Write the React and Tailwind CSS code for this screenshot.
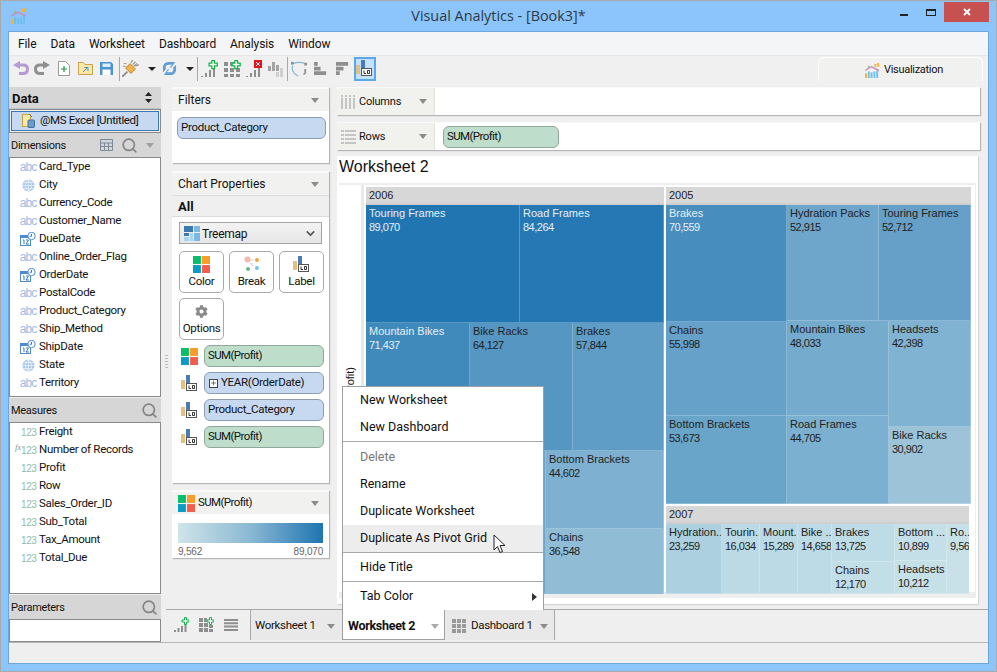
import React from "react";
import { Search, ChevronDown, Plus } from "lucide-react";
import { FaCog } from "react-icons/fa";

const dimensions = [
  ["abc", "Card_Type"],
  ["geo", "City"],
  ["abc", "Currency_Code"],
  ["abc", "Customer_Name"],
  ["date", "DueDate"],
  ["abc", "Online_Order_Flag"],
  ["date", "OrderDate"],
  ["abc", "PostalCode"],
  ["abc", "Product_Category"],
  ["abc", "Ship_Method"],
  ["date", "ShipDate"],
  ["geo", "State"],
  ["abc", "Territory"],
];

const measures = [
  "Freight",
  "Number of Records",
  "Profit",
  "Row",
  "Sales_Order_ID",
  "Sub_Total",
  "Tax_Amount",
  "Total_Due",
];

const small = "text-[11.500px] tracking-[-0.3px]";

const Tri = ({ color = "#8c8c8c" }) => (
  <svg width="8" height="5" viewBox="0 0 8 5" className="shrink-0">
    <path d="M0 0h8L4 5z" fill={color} />
  </svg>
);

const Caret = () => (
  <svg width="8" height="4" viewBox="0 0 8 4" className="shrink-0">
    <path d="M0 0h8L4 4z" fill="#222" />
  </svg>
);

const Squares = ({ s = 7 }) => (
  <svg width={s * 2 + 1} height={s * 2 + 1} viewBox="0 0 15 15" className="shrink-0">
    <rect width="7" height="7" fill="#08bd6c" />
    <rect x="8" width="7" height="7" fill="#f99d2a" />
    <rect y="8" width="7" height="7" fill="#0a9bc7" />
    <rect x="8" y="8" width="7" height="7" fill="#f45d4e" />
  </svg>
);

const LabelIcon = () => (
  <svg width="17" height="17" viewBox="0 0 17 17" className="shrink-0">
    <rect x="0" y="5" width="4" height="9" fill="#e5bf80" />
    <rect x="5" y="0" width="4" height="8" fill="#4a7bb5" />
    <rect x="5.500" y="8.500" width="10" height="7" fill="#fff" stroke="#555" />
    <path d="M8 10.500v3h2M11.500 10.500h2v3h-2z" fill="none" stroke="#333" />
  </svg>
);

const Globe = () => (
  <svg width="13" height="13" viewBox="0 0 13 13">
    <circle cx="6.500" cy="6.500" r="6" fill="#a9c8ec" />
    <path d="M.5 6.500h12M1.500 3.500h10M1.500 9.500h10M6.500.5v12M6.500.5c-4 3-4 9 0 12M6.500.5c4 3 4 9 0 12" fill="none" stroke="#e8f1fb" strokeWidth=".8" />
  </svg>
);

const DateIcon = () => (
  <svg width="16" height="14" viewBox="0 0 16 14">
    <rect x=".5" y="3.500" width="10" height="10" fill="#fff" stroke="#4c8bd0" />
    <rect x="0" y="3" width="11" height="3" fill="#4c8bd0" />
    <path d="M3 8h1v4M6 8h2.500L6 12h3" fill="none" stroke="#3a78bd" />
    <circle cx="11.500" cy="4" r="3.700" fill="#fff" stroke="#4c8bd0" />
    <path d="M11.500 2v2.300h-1.800" fill="none" stroke="#3a78bd" />
  </svg>
);

const FieldIcon = ({ type }) => {
  if (type === "geo") return <Globe />;
  if (type === "date") return <DateIcon />;
  return <span className="text-[12px] tracking-[-0.9px] leading-none text-[#9dbbe8] [font-family:'Liberation_Sans',sans-serif] font-medium">abc</span>;
};

const AppLogo = ({ s = 16 }) => (
  <svg width={s} height={s} viewBox="0 0 16 16" className="shrink-0">
    <rect x="0" y="11" width="2" height="5" fill="#f8b133" />
    <rect x="3" y="9" width="2" height="7" fill="#6cc0ee" />
    <rect x="6" y="10" width="2" height="6" fill="#6cc0ee" />
    <rect x="9" y="9" width="2" height="7" fill="#6cc0ee" />
    <rect x="12" y="8" width="2" height="8" fill="#6cc0ee" />
    <rect x="3" y="3" width="2" height="2" fill="#8cc47e" />
    <rect x="10" y="1" width="2" height="3" fill="#f8b133" />
    <rect x="13" y="0" width="2" height="4" fill="#f8b133" />
    <path d="M0 8l7-4 8 4" fill="none" stroke="#c78fc0" strokeWidth="1.500" />
  </svg>
);

const BarsAdd = ({ mark = "plus" }) => (
  <svg width="18" height="18" viewBox="0 0 18 18">
    <path d="M1 16h2v1H1zM5 13h2v4H5zM9 10h2v7H9zM13 8h2v9h-2z" fill="#8e8e8e" />
    {mark === "plus" && <path d="M9 3h3V0h3v3h3v3h-3v3h-3V6H9z" fill="#fff" stroke="#12b34a" strokeWidth="1.400" transform="translate(1 .5) scale(.9)" />}
    {mark === "x" && (
      <g>
        <rect x="9" y="0" width="8" height="8" fill="#e5141c" />
        <path d="M11 2l4 4M15 2l-4 4" stroke="#fff" />
      </g>
    )}
  </svg>
);

const GridAdd = () => (
  <svg width="18" height="18" viewBox="0 0 18 18">
    <path d="M1 2h4v4H1zM7 2h4v4H7zM1 8h4v4H1zM7 8h4v4H7zM13 8h4v4h-4zM1 14h4v3H1zM7 14h4v3H7zM13 14h4v3h-4z" fill="#8e8e8e" />
    <path d="M9 3h3V0h3v3h3v3h-3v3h-3V6H9z" fill="#fff" stroke="#12b34a" strokeWidth="1.400" transform="translate(1 .5) scale(.9)" />
  </svg>
);

const toolbarIcons = {
  undo: (
    <svg width="16" height="15" viewBox="0 0 16 15">
      <path d="M6 4h4c3 0 4.500 1.500 4.500 4s-1.500 4.500-4.500 4.500H6" fill="none" stroke="#b49bd2" strokeWidth="3" />
      <path d="M7 0v8L0 4z" fill="#b49bd2" />
    </svg>
  ),
  redo: (
    <svg width="16" height="15" viewBox="0 0 16 15">
      <path d="M10 4H6C3 4 1.500 5.500 1.500 8s1.500 4.500 4.500 4.500h4" fill="none" stroke="#8f8f8f" strokeWidth="3" />
      <path d="M9 0v8l7-4z" fill="#8f8f8f" />
    </svg>
  ),
  doc: (
    <svg width="12" height="15" viewBox="0 0 12 15">
      <path d="M.5.5h7l4 4v10H.5z" fill="#fff" stroke="#9a9a9a" />
      <path d="M6 5v6M3 8h6" stroke="#1c9a3f" strokeWidth="1.200" />
    </svg>
  ),
  folder: (
    <svg width="15" height="13" viewBox="0 0 15 13">
      <path d="M.5.5h5l1.500 2h7.500v10H.5z" fill="#fbe7a6" stroke="#c9a24e" />
      <path d="M5 10l4-4M6.500 5.500H10V9" fill="none" stroke="#3d8fd1" />
    </svg>
  ),
  save: (
    <svg width="13" height="13" viewBox="0 0 13 13">
      <path d="M0 0h11l2 2v11H0z" fill="#4b94cf" />
      <rect x="2.500" y="1.500" width="8" height="3.500" fill="#dcecf8" />
      <rect x="2.500" y="7.500" width="8" height="5.500" fill="#fff" />
    </svg>
  ),
  plug: (
    <svg width="17" height="17" viewBox="0 0 19 19">
      <path d="M0 19l6-6" stroke="#8a8a8a" strokeWidth="2" />
      <path d="M4 9l5-5 6 6-5 5z" fill="#f1b24a" stroke="#b87c20" />
      <path d="M10 3l2-3M15 7l4-2M12 5l3-3M13 7l4-3" stroke="#999" strokeWidth="1.400" />
      <path d="M2 4h3M1 7h3" stroke="#8a8a8a" />
    </svg>
  ),
  refresh: (
    <svg width="15" height="15" viewBox="0 0 16 16">
      <path d="M14 1H7C3 1 1 4 1 7v5l3-3V7c0-2 1-3 3-3h4L8 7h2z" fill="#5f9fd6" />
      <path d="M2 15h7c4 0 6-3 6-6V4l-3 3v2c0 2-1 3-3 3H5l3-3H6z" fill="#5f9fd6" />
    </svg>
  ),
  bars: (
    <svg width="16" height="17" viewBox="0 0 16 17">
      <path d="M0 6h3v5H0zM4 2h3v9H4zM8 5h3v6H8z" fill="#a3a3a3" />
      <path d="M8 12h3v5H8zM12 8h3v9h-3z" fill="#cfcfcf" />
    </svg>
  ),
  lasso: (
    <svg width="16" height="16" viewBox="0 0 18 18">
      <path d="M2 3c5-2 9-2 14 0M2 5c-2 5 1 9 6 12" fill="none" stroke="#7db6de" strokeWidth="1.300" />
      <path d="M14 15l2-1" stroke="#8e8e8e" strokeWidth="1.500" />
      <rect x="0" y="1" width="3" height="3" fill="#8e8e8e" />
      <rect x="15" y="2" width="3" height="3" fill="#8e8e8e" />
      <rect x="15" y="9" width="2" height="5" fill="#8e8e8e" />
    </svg>
  ),
  sortH: (
    <svg width="14" height="14" viewBox="0 0 15 15">
      <path d="M0 0h4v4H0zM0 5h7v4H0zM0 10h13v4H0z" fill="#8e8e8e" />
    </svg>
  ),
  sortD: (
    <svg width="14" height="14" viewBox="0 0 15 15">
      <path d="M0 0h13v4H0zM0 5h8v4H0zM0 10h4v4H0z" fill="#8e8e8e" />
    </svg>
  ),
};

const ToolBtn = ({ w = "w-[21.500px]", className = "", children }) => (
  <div className={`${w} h-full flex items-center justify-center shrink-0 ${className}`}>{children}</div>
);

const ToolSep = ({ className = "" }) => <div className={`w-px h-[24px] bg-[#a8a8a8] shrink-0 ${className}`} />;

const Toolbar = () => (
  <div className="h-[29px] flex items-center pl-[1px] pb-[4px] bg-[#f0f0f0] shrink-0">
    <ToolBtn>{toolbarIcons.undo}</ToolBtn>
    <ToolBtn>{toolbarIcons.redo}</ToolBtn>
    <ToolBtn>{toolbarIcons.doc}</ToolBtn>
    <ToolBtn>{toolbarIcons.folder}</ToolBtn>
    <ToolBtn>{toolbarIcons.save}</ToolBtn>
    <ToolSep className="ml-[1.500px]" />
    <ToolBtn>{toolbarIcons.plug}</ToolBtn>
    <ToolBtn w="w-[20px]"><Caret /></ToolBtn>
    <ToolBtn w="w-[16px]">{toolbarIcons.refresh}</ToolBtn>
    <ToolBtn w="w-[14px]" className="ml-[5px]"><Caret /></ToolBtn>
    <ToolSep />
    <ToolBtn w="w-[23px]"><BarsAdd /></ToolBtn>
    <ToolBtn w="w-[22px]"><GridAdd /></ToolBtn>
    <ToolBtn w="w-[23px]"><BarsAdd mark="x" /></ToolBtn>
    <ToolBtn w="w-[21px]">{toolbarIcons.bars}</ToolBtn>
    <ToolSep />
    <ToolBtn w="w-[22px]">{toolbarIcons.lasso}</ToolBtn>
    <ToolBtn w="w-[22px]">{toolbarIcons.sortH}</ToolBtn>
    <ToolBtn w="w-[22px]">{toolbarIcons.sortD}</ToolBtn>
    <div className="w-[22px] h-[24px] flex items-center justify-center bg-[#c4e2fb] border-2 border-[#5aa7ec] shrink-0">
      <LabelIcon />
    </div>
    <div className="ml-auto mr-[5px] w-[165px] h-[24px] flex items-center justify-center gap-[4px] bg-[#f1f1f0] border-t border-l border-r border-white rounded-t-[6px] text-[11px] tracking-[-0.3px] pl-[7px] pt-[3px]">
      <AppLogo s={15} />
      Visualization
    </div>
  </div>
);

const GrayHeader = ({ title, children }) => (
  <div className="h-[24px] bg-[#d6d6d6] flex items-center px-[2px] shrink-0">
    <span className="text-[11px] tracking-[-0.3px] pt-[2px]">{title}</span>
    <div className="ml-auto flex items-center gap-[8px]">{children}</div>
  </div>
);

const Mag = () => <Search size={17} strokeWidth={2.400} color="#858585" />;

const LeftPanel = () => (
  <div className="w-[152px] shrink-0 flex flex-col pt-[2px]">
    <div className="h-[22px] bg-[#d6d6d6] flex items-center pl-[3px] pr-[9px] shrink-0 border-b border-[#c2c2c2]">
      <span className="font-bold text-[13px] pt-[2px]">Data</span>
      <svg width="7" height="11" viewBox="0 0 7 11" className="ml-auto">
        <path d="M3.500 0L7 4H0zM3.500 11L0 7h7z" fill="#222" />
      </svg>
    </div>
    <div className="h-[24px] bg-[#f1f1f1] border border-[#8a8a8a] flex items-center px-[1px] shrink-0">
      <div className="w-full h-[20px] bg-[#c7d9f1] border border-[#3f74b5] flex items-center gap-[5px] pl-[10px] text-[11.500px] tracking-[-0.35px]">
        <svg width="13" height="14" viewBox="0 0 13 14" className="shrink-0">
          <rect x=".5" y=".5" width="8" height="12" fill="#fbeaa0" stroke="#c9a24e" />
          <path d="M7 0l3 3" stroke="#3a7cbd" />
          <rect x="6" y="6" width="6.500" height="7.500" rx="1" fill="#6d9cc9" stroke="#3d6f9f" />
        </svg>
        @MS Excel [Untitled]
      </div>
    </div>
    <GrayHeader title="Dimensions">
      <svg width="13" height="12" viewBox="0 0 13 12">
        <path d="M.5.5h12v11H.5zM.5 4h12M.5 7.500h12M4.500 4v7.500M8.500 4v7.500" fill="none" stroke="#7b8a99" />
      </svg>
      <Mag />
      <div className="mr-[5px]"><Tri color="#a0a0a0" /></div>
    </GrayHeader>
    <div className="h-[240px] bg-white border border-[#8a8a8a] shrink-0 overflow-hidden">
      {dimensions.map(([type, name], i) => (
        <div key={i} className={`h-[18px] flex items-center ${small}`}>
          <div className="w-[16px] ml-[10px] shrink-0 flex justify-center">
            <FieldIcon type={type} />
          </div>
          <span className="ml-[3px]">{name}</span>
        </div>
      ))}
    </div>
    <div className="pt-[1px]">
      <GrayHeader title="Measures">
        <div className="mr-[1px]"><Mag /></div>
      </GrayHeader>
    </div>
    <div className="h-[172px] bg-white border border-[#8a8a8a] shrink-0 overflow-hidden">
      {measures.map((name, i) => (
        <div key={i} className={`h-[18px] flex items-center relative ${small}`}>
          {i === 1 && <span className="absolute left-[5px] top-[0px] text-[9px] italic text-[#8d9a92] [font-family:'Liberation_Serif',serif]">fx</span>}
          <span className="w-[18px] ml-[11px] shrink-0 text-[10px] tracking-[-0.4px] font-medium text-[#8fbca9] [font-family:'Liberation_Sans',sans-serif]">123</span>
          <span>{name}</span>
        </div>
      ))}
    </div>
    <div className="pt-[1px]">
      <GrayHeader title="Parameters">
        <div className="mr-[1px]"><Mag /></div>
      </GrayHeader>
    </div>
    <div className="h-[23px] bg-white border border-[#8a8a8a] shrink-0" />
  </div>
);

const Card = ({ className = "", children }) => (
  <div className={`bg-white border-t-2 border-[#fafafa] shadow-[1px_1px_1px_#b5b5b5] w-[157px] shrink-0 ${className}`}>
    {children}
  </div>
);

const CardHeader = ({ children }) => (
  <div className="h-[22px] bg-[#f1f1ef] flex items-center pl-[6px] pr-[10px] gap-[3px] text-[12px]">
    {children}
    <div className="ml-auto"><Tri /></div>
  </div>
);

const Pill = ({ green, children, className = "" }) => (
  <div
    className={`h-[22px] flex items-center pl-[3px] rounded-[6px] border ${small} ${
      green ? "bg-[#bedecb] border-[#8fa89a]" : "bg-[#c7d9f1] border-[#8c9db3]"
    } ${className}`}
  >
    {children}
  </div>
);

const PropBtn = ({ icon, label }) => (
  <div className={`w-[45px] h-[42px] bg-white border border-[#a8a8a8] rounded-[5px] flex flex-col items-center pt-[3px] shrink-0 ${small}`}>
    <div className="h-[18px] flex items-center justify-center">{icon}</div>
    <span className="mt-[1px] leading-[14px]">{label}</span>
  </div>
);

const BreakIcon = () => (
  <svg width="16" height="16" viewBox="0 0 16 16">
    <circle cx="3.500" cy="3.500" r="3" fill="#f5b7ae" />
    <circle cx="13" cy="4" r="2" fill="#f5a33a" />
    <circle cx="4" cy="13" r="2" fill="#6cb884" />
    <circle cx="13" cy="12" r="2" fill="#79c2ec" />
    <path d="M7 4h3M6 7l3 3M8 7v2" stroke="#bbb" strokeWidth=".7" />
  </svg>
);

const TreemapIcon = () => (
  <svg width="16" height="15" viewBox="0 0 16 15" className="shrink-0">
    <rect width="9" height="6" fill="#3e79ad" />
    <rect x="10" width="6" height="6" fill="#7ab8e6" />
    <rect y="7" width="5" height="3" fill="#3e79ad" />
    <rect y="11" width="5" height="4" fill="#a9d3ef" />
    <rect x="6" y="7" width="3" height="8" fill="#a9d3ef" />
    <rect x="10" y="7" width="6" height="8" fill="#7ab8e6" />
  </svg>
);

const PillRow = ({ icon, children }) => (
  <div className="flex items-center h-[27px]">
    <div className="w-[32px] pl-[3px] flex justify-center shrink-0">{icon}</div>
    <div className="flex-1 mr-[5px]">{children}</div>
  </div>
);

const MiddlePanel = () => (
  <div className="w-[157px] shrink-0 flex flex-col pt-[2px]">
    <Card className="h-[76px]">
      <CardHeader>Filters</CardHeader>
      <div className="pl-[5px] pr-[3px] pt-[6px]">
        <Pill className="h-[18px]">Product_Category</Pill>
      </div>
    </Card>
    <Card className="h-[312px] mt-[8px]">
      <CardHeader>Chart Properties</CardHeader>
      <div className="h-[22px] bg-[#efefef] border-y border-[#dcdcdc] flex items-center pl-[6px] pt-[2px] font-bold text-[13px]">All</div>
      <div className="px-[7px] pt-[5px]">
        <div className="h-[22px] bg-[linear-gradient(#f3f3f3,#e6e6e6)] border border-[#a2a2a2] flex items-center pl-[4px] pr-[4px] gap-[2px] text-[12px] tracking-[-0.3px]">
          <TreemapIcon />
          <span className="pt-[1px]">Treemap</span>
          <ChevronDown size={13} strokeWidth={3} color="#555" className="ml-auto" />
        </div>
        <div className="flex gap-[5px] mt-[7px]">
          <PropBtn icon={<Squares s={8} />} label="Color" />
          <PropBtn icon={<BreakIcon />} label="Break" />
          <PropBtn icon={<LabelIcon />} label="Label" />
        </div>
        <div className="mt-[5px]">
          <PropBtn icon={<FaCog size={13} color="#8a8a8a" />} label="Options" />
        </div>
      </div>
      <div className="mt-[2.500px]">
        <PillRow icon={<Squares s={8} />}><Pill green className="tracking-[-0.6px]">SUM(Profit)</Pill></PillRow>
        <PillRow icon={<LabelIcon />}>
          <Pill>
            <span className="w-[9px] h-[9px] mx-[1px] mr-[3px] border border-[#444] bg-white flex items-center justify-center">
              <Plus size={8} strokeWidth={2} color="#222" />
            </span>
            YEAR(OrderDate)
          </Pill>
        </PillRow>
        <PillRow icon={<LabelIcon />}><Pill>Product_Category</Pill></PillRow>
        <PillRow icon={<LabelIcon />}><Pill green className="tracking-[-0.6px]">SUM(Profit)</Pill></PillRow>
      </div>
    </Card>
    <Card className="h-[68px] mt-[7px]">
      <CardHeader>
        <Squares s={8} />
        <span className="text-[11.500px] tracking-[-0.6px]">SUM(Profit)</span>
      </CardHeader>
      <div className="px-[6px] pt-[9px]">
        <div className="h-[20px] bg-[linear-gradient(90deg,#cfe4e9,#8ab8d3_50%,#1f75b1)]" />
        <div className="flex justify-between text-[10px] tracking-[-0.2px] text-[#666] mt-[1px] [font-family:'Liberation_Sans',sans-serif]">
          <span>9,562</span>
          <span>89,070</span>
        </div>
      </div>
    </Card>
  </div>
);

const Cell = ({ name, value, color, light, className = "" }) => (
  <div
    style={{ backgroundColor: color }}
    className={`overflow-hidden whitespace-nowrap border-r border-b border-white/25 pl-[3px] pt-[1px] leading-[14px] ${
      light ? "text-[#e6eff6]" : "text-[#222]"
    } ${className}`}
  >
    {name && <div>{name}</div>}
    {value && <div className="tracking-[-0.5px]">{value}</div>}
  </div>
);

const YearHeader = ({ children }) => (
  <div className="h-[18px] shrink-0 bg-[#d7d7d7] border-b-2 border-[#cfcfcf] flex items-center pl-[3px] pt-[1px] text-[#222]">{children}</div>
);

const Treemap = () => (
  <div className="w-[605px] h-[407px] flex gap-[2px] text-[11px] [font-family:'Liberation_Sans',sans-serif]">
    <div className="w-[298px] flex flex-col">
      <YearHeader>2006</YearHeader>
      <div className="h-[118px] flex shrink-0">
        <Cell name="Touring Frames" value="89,070" color="#2176b2" light className="w-[154px]" />
        <Cell name="Road Frames" value="84,264" color="#2578b3" light className="flex-1" />
      </div>
      <div className="flex-1 flex">
        <Cell name="Mountain Bikes" value="71,437" color="#3f8abb" light className="w-[104px]" />
        <div className="flex-1 flex flex-col">
          <div className="h-[128px] flex">
            <Cell name="Bike Racks" value="64,127" color="#5596c2" className="w-[103px]" />
            <Cell name="Brakes" value="57,844" color="#5f9dc6" className="flex-1" />
          </div>
          <div className="flex-1 flex">
            <Cell color="#6ea5ca" className="w-[76px]" />
            <div className="flex-1 flex flex-col">
              <Cell name="Bottom Brackets" value="44,602" color="#7eb1d1" className="h-[78px]" />
              <Cell name="Chains" value="36,548" color="#90bcd5" className="flex-1 border-b-0" />
            </div>
          </div>
        </div>
      </div>
    </div>
    <div className="w-[305px] flex flex-col">
      <YearHeader>2005</YearHeader>
      <div className="h-[299px] flex shrink-0">
        <div className="w-[121px] flex flex-col">
          <Cell name="Brakes" value="70,559" color="#478dbe" light className="h-[117px]" />
          <Cell name="Chains" value="55,998" color="#65a1c8" className="h-[94px]" />
          <Cell name="Bottom Brackets" value="53,673" color="#69a4c9" className="flex-1" />
        </div>
        <div className="flex-1 flex flex-col">
          <div className="h-[116px] flex">
            <Cell name="Hydration Packs" value="52,915" color="#6ea5ca" className="w-[92px]" />
            <Cell name="Touring Frames" value="52,712" color="#669fc7" className="flex-1" />
          </div>
          <div className="flex-1 flex">
            <div className="w-[102px] flex flex-col">
              <Cell name="Mountain Bikes" value="48,033" color="#75abcd" className="h-[95px]" />
              <Cell name="Road Frames" value="44,705" color="#7cb0d0" className="flex-1" />
            </div>
            <div className="flex-1 flex flex-col">
              <Cell name="Headsets" value="42,398" color="#80b2d1" className="h-[106px]" />
              <Cell name="Bike Racks" value="30,902" color="#9cc3d8" className="flex-1" />
            </div>
          </div>
        </div>
      </div>
      <div className="h-[2px] shrink-0" />
      <div className="w-[303px] flex-1 flex flex-col">
        <YearHeader>2007</YearHeader>
        <div className="flex-1 flex">
          <Cell name="Hydration..." value="23,259" color="#acd0e0" className="w-[56px]" />
          <Cell name="Tourin.." value="16,034" color="#bbdae5" className="w-[38px]" />
          <Cell name="Mount." value="15,289" color="#bbdae5" className="w-[38px]" />
          <Cell name="Bike ..." value="14,658" color="#bddbe6" className="w-[34px]" />
          <div className="w-[63px] flex flex-col">
            <Cell name="Brakes" value="13,725" color="#bedce6" className="h-[38px]" />
            <Cell name="Chains" value="12,170" color="#c2dee7" className="flex-1" />
          </div>
          <div className="w-[52px] flex flex-col">
            <Cell name="Bottom ..." value="10,899" color="#c5dfe8" className="h-[37px]" />
            <Cell name="Headsets" value="10,212" color="#c6e0e8" className="flex-1" />
          </div>
          <Cell name="Ro.." value="9,562" color="#c8e1e9" className="flex-1 border-r-0" />
        </div>
      </div>
    </div>
  </div>
);

const Shelf = ({ icon, label, children }) => (
  <div className="h-[28px] flex bg-white shadow-[1px_1px_1px_#b5b5b5] border-t border-[#fafafa] shrink-0">
    <div className="w-[98px] bg-[#f1f1ee] border-r border-[#e4e4da] flex items-center pl-[4px] gap-[3px] text-[11px] tracking-[-0.2px] rounded-tl-[3px]">
      {icon}
      <span className="pt-[2px]">{label}</span>
      <div className="ml-auto mr-[7px]"><Tri /></div>
    </div>
    <div className="flex-1 flex items-center pl-[8px]">{children}</div>
  </div>
);

const RightPanel = () => (
  <div className="w-[643px] shrink-0 flex flex-col pt-[2px]">
    <Shelf
      label="Columns"
      icon={
        <svg width="15" height="14" viewBox="0 0 15 14">
          <path d="M0 0h2v2H0zM0 3h2v11H0zM4 0h2v2H4zM4 3h2v11H4zM8 0h2v2H8zM8 3h2v11H8zM12 0h2v2h-2zM12 3h2v11h-2z" fill="#c4c4c4" />
        </svg>
      }
    />
    <div className="h-[7px] shrink-0" />
    <Shelf
      label="Rows"
      icon={
        <svg width="15" height="14" viewBox="0 0 15 14">
          <path d="M0 0h3v2H0zM4 0h11v2H4zM0 4h3v2H0zM4 4h11v2H4zM0 8h3v2H0zM4 8h11v2H4zM0 12h3v2H0zM4 12h11v2H4z" fill="#c4c4c4" />
        </svg>
      }
    >
      <Pill green className="w-[116px] h-[18px] tracking-[-0.6px]">SUM(Profit)</Pill>
    </Shelf>
    <div className="h-[6px] shrink-0" />
    <div className="w-[641px] h-[448px] bg-white shadow-[1px_1px_1px_#d5d5d5] flex flex-col shrink-0">
      <div className="h-[27px] pl-[2px] pb-[5px] flex items-center text-[16px] shrink-0 [font-family:'Liberation_Sans',sans-serif]">Worksheet 2</div>
      <div className="w-[637px] h-[415px] ml-[2px] border-t-2 border-r border-b-[6px] border-[#eeeeee] flex shrink-0">
        <div className="w-[22px] shrink-0 flex items-center justify-center pt-[14px]">
          <span className="[writing-mode:vertical-rl] rotate-180 text-[11px] [font-family:'Liberation_Sans',sans-serif]">SUM(Profit)</span>
        </div>
        <div className="w-[3px] bg-[#e8e8e8] shrink-0" />
        <div className="pl-[2px] pt-[2px]">
          <Treemap />
        </div>
      </div>
    </div>
  </div>
);

const MenuItem = ({ disabled, active, children }) => (
  <div className={`h-[27px] flex items-center pl-[17px] text-[12.500px] tracking-normal font-normal ${disabled ? "text-[#777]" : "text-[#111]"} ${active ? "bg-[#ededed]" : ""}`}>
    {children}
  </div>
);

const MenuSep = () => <div className="h-px bg-[#a8a8a8]" />;

const TabMenu = () => (
  <div className="absolute left-[-1px] bottom-full w-[202px] bg-white border-l border-r border-t border-[#a0a0a0] z-10">
    <MenuItem>New Worksheet</MenuItem>
    <MenuItem>New Dashboard</MenuItem>
    <MenuSep />
    <div className="h-[2px]" />
    <MenuItem disabled>Delete</MenuItem>
    <MenuItem>Rename</MenuItem>
    <MenuItem>Duplicate Worksheet</MenuItem>
    <MenuItem active>Duplicate As Pivot Grid</MenuItem>
    <MenuSep />
    <div className="h-px" />
    <MenuItem>Hide Title</MenuItem>
    <MenuSep />
    <div className="h-px" />
    <div className="flex items-center pr-[6px]">
      <div className="flex-1"><MenuItem>Tab Color</MenuItem></div>
      <svg width="5" height="8" viewBox="0 0 5 8"><path d="M0 0l5 4-5 4z" fill="#333" /></svg>
    </div>
    <svg width="13" height="20" viewBox="0 0 13 20" className="absolute left-[150px] top-[147px]">
      <path d="M1 1v15l3.500-3.500 2.500 6 2.500-1-2.500-6H12z" fill="#fff" stroke="#222" strokeWidth="1" />
    </svg>
  </div>
);

const TabStrip = () => (
  <div className={`h-[33px] ml-[5px] border-t border-[#a8a8a8] flex shrink-0 ${small} whitespace-nowrap`}>
    <div className="w-[84px] flex items-center shrink-0 gap-[10px] pl-[8px] pb-[3px]">
      <svg width="15" height="15" viewBox="0 0 15 15">
        <path d="M0 13h2v2H0zM3.500 11h2v4h-2zM7 9h2v6H7zM10.500 7h2v8h-2z" fill="#8e8e8e" />
        <path d="M8 3h2.500V.5h2V3H15v2h-2.500v2.500h-2V5H8z" fill="#fff" stroke="#12b34a" />
      </svg>
      <svg width="15" height="15" viewBox="0 0 15 15">
        <path d="M0 1h4v4H0zM5 1h3v4H5zM0 6h4v4H0zM5 6h4v4H5zM10 8h4v3h-4zM0 11h4v4H0zM5 11h4v4H5zM10 12h4v3h-4z" fill="#8e8e8e" />
        <path d="M8 3h2.500V.5h2V3H15v2h-2.500v2.500h-2V5H8z" fill="#fff" stroke="#12b34a" />
      </svg>
      <svg width="14" height="12" viewBox="0 0 14 12">
        <path d="M0 0h14v2H0zM0 3.300h14v2H0zM0 6.600h14v2H0zM0 10h14v2H0z" fill="#8e8e8e" />
      </svg>
    </div>
    <div className="w-[92px] h-[30px] bg-[#e9e9e9] border-l border-[#a8a8a8] flex items-center pl-[4px] pr-[7px] pt-[2px] shrink-0">
      Worksheet 1
      <div className="ml-auto"><Tri /></div>
    </div>
    <div className="w-[103px] h-[30px] bg-white border-l border-r border-b border-[#a0a0a0] flex items-center pl-[5px] pr-[5px] pt-[3px] font-bold text-[12.500px] shrink-0 relative">
      <TabMenu />
      Worksheet 2
      <div className="ml-auto"><Tri color="#aaaaaa" /></div>
    </div>
    <div className="w-[110px] h-[30px] bg-[#e9e9e9] border-r border-[#a8a8a8] flex items-center pl-[7px] pr-[6px] pt-[2px] gap-[5px] shrink-0">
      <svg width="14" height="14" viewBox="0 0 14 14">
        <path d="M0 0h4v4H0zM5 0h4v4H5zM10 0h4v4h-4zM0 5h4v4H0zM5 5h4v4H5zM10 5h4v4h-4zM0 10h4v4H0zM5 10h4v4H5zM10 10h4v4h-4z" fill="#9a9a9a" />
      </svg>
      Dashboard 1
      <div className="ml-auto"><Tri /></div>
    </div>
  </div>
);

export default function App() {
  return (
    <div className="w-[997px] h-[672px] overflow-hidden border border-[#a9a9a9] bg-[#8bc5fb] flex flex-col text-[#111] [font-family:Roboto,sans-serif]">
      <div className="h-[30px] relative flex items-center justify-center shrink-0">
        <div className="absolute left-[10px] top-[7px]"><AppLogo /></div>
        <span className="text-[14.400px] text-[#2b3a47] [font-family:'Open_Sans',sans-serif]">Visual Analytics - [Book3]*</span>
        <div className="absolute right-[7px] top-[1px] flex items-start">
          <div className="w-[8px] h-[2px] bg-[#222] mt-[12px] mr-[18px]" />
          <div className="w-[10px] h-[7px] border border-t-2 border-[#222] mt-[7px] mr-[8px]" />
          <div className="w-[45px] h-[20px] bg-[#c75050] flex items-center justify-center">
            <svg width="8" height="8" viewBox="0 0 8 8">
              <path d="M1 1l6 6M7 1l-6 6" stroke="#fff" strokeWidth="1.800" />
            </svg>
          </div>
        </div>
      </div>
      <div className="flex-1 mx-[7px] mb-[7px] border border-[#6ea6dc] bg-[#efefef] flex flex-col min-h-0">
        <div className="h-[24px] bg-[#f4f5f7] border-b border-[#e6e6e6] flex items-center gap-[14px] pl-[9px] text-[12px] tracking-[-0.1px] shrink-0">
          <span>File</span>
          <span>Data</span>
          <span>Worksheet</span>
          <span>Dashboard</span>
          <span>Analysis</span>
          <span>Window</span>
        </div>
        <Toolbar />
        <div className="flex-1 flex min-h-0">
          <LeftPanel />
          <div className="flex-1 flex flex-col min-w-0">
            <div className="h-[524px] flex shrink-0 relative">
              <div className="w-[11px] shrink-0 flex items-start justify-center pt-[270px]">
                <div className="w-[3px] h-[15px] bg-[repeating-linear-gradient(#bbb_0_1px,transparent_1px_3px)]" />
              </div>
              <MiddlePanel />
              <div className="w-[8px] shrink-0" />
              <RightPanel />
            </div>
            <TabStrip />
          </div>
        </div>
        <div className="h-[21px] border-t border-[#b5b5b5] shrink-0" />
      </div>
    </div>
  );
}
